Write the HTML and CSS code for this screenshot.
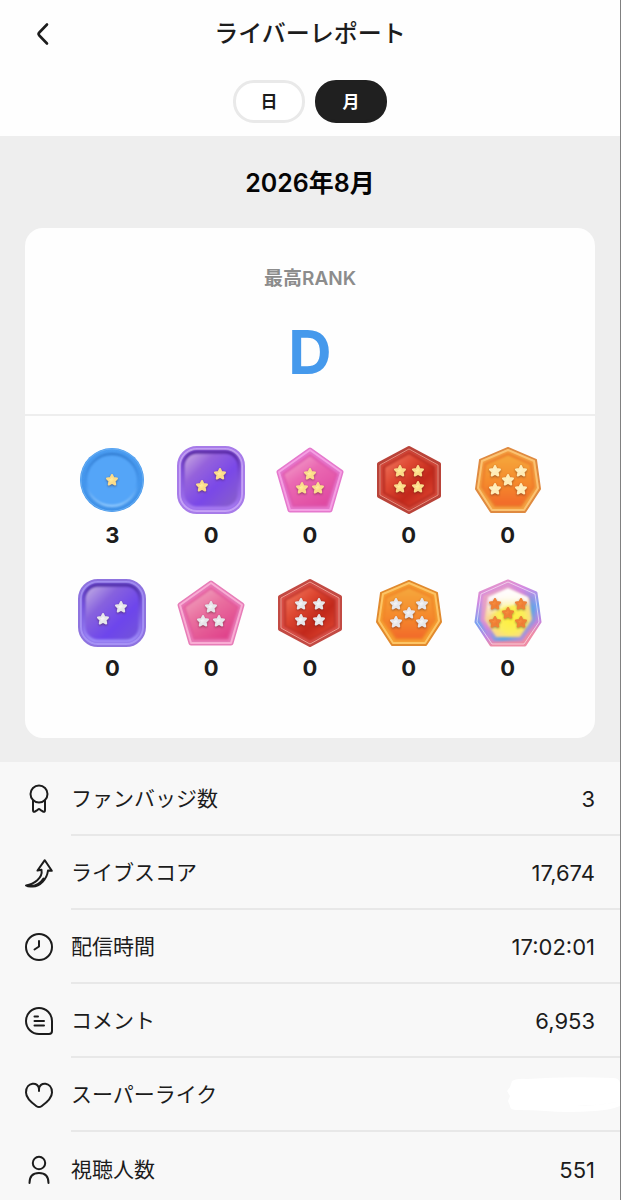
FILE: index.html
```html
<!DOCTYPE html>
<html lang="ja">
<head>
<meta charset="utf-8">
<meta name="viewport" content="width=device-width, initial-scale=1">
<title>ライバーレポート</title>
<link rel="stylesheet" href="styles.css">
</head>
<body>
<svg class="defs" aria-hidden="true">
  <defs>
    <linearGradient id="blue-rim" x1="0" y1="0" x2="0" y2="1"><stop offset="0" stop-color="#2f78cc"/><stop offset=".6" stop-color="#4697ee"/><stop offset="1" stop-color="#9fd2ff"/></linearGradient>
    <linearGradient id="blue" x1="0" y1="0" x2="0" y2="1"><stop offset="0" stop-color="#4b9df2"/><stop offset="1" stop-color="#3f91e8"/></linearGradient>
    <linearGradient id="violet" x1="0" y1="0" x2="1" y2="1"><stop offset="0" stop-color="#d0b4e4"/><stop offset=".3" stop-color="#9562dc"/><stop offset=".6" stop-color="#7a48e8"/><stop offset="1" stop-color="#8a62c6"/></linearGradient>
    <linearGradient id="violet-rim" x1="0" y1="0" x2="0" y2="1"><stop offset="0" stop-color="#53249f"/><stop offset=".35" stop-color="#7646d2"/><stop offset="1" stop-color="#a87cf2"/></linearGradient>
    <linearGradient id="indigo-rim" x1="0" y1="0" x2="0" y2="1"><stop offset="0" stop-color="#4c2ba6"/><stop offset=".35" stop-color="#6c49d6"/><stop offset="1" stop-color="#a291fa"/></linearGradient>
    <linearGradient id="indigo" x1="0" y1="0" x2="1" y2="1"><stop offset="0" stop-color="#cab8e6"/><stop offset=".33" stop-color="#8762de"/><stop offset=".65" stop-color="#6d45ec"/><stop offset="1" stop-color="#7456d6"/></linearGradient>
    <linearGradient id="pink" x1="0" y1="0" x2=".7" y2="1"><stop offset="0" stop-color="#f6b3d3"/><stop offset=".45" stop-color="#ea69b2"/><stop offset="1" stop-color="#e04aa2"/></linearGradient>
    <linearGradient id="rose" x1="0" y1="0" x2=".7" y2="1"><stop offset="0" stop-color="#f4b3c9"/><stop offset=".5" stop-color="#e96f9f"/><stop offset="1" stop-color="#e0438b"/></linearGradient>
    <linearGradient id="red" x1="0" y1=".1" x2=".8" y2="1"><stop offset="0" stop-color="#f07860"/><stop offset=".35" stop-color="#de4832"/><stop offset=".68" stop-color="#c2281b"/><stop offset="1" stop-color="#de4530"/></linearGradient>
    <linearGradient id="orange" x1="0" y1="0" x2="0" y2="1"><stop offset="0" stop-color="#f5a93d"/><stop offset=".55" stop-color="#f58a2c"/><stop offset="1" stop-color="#f2692a"/></linearGradient>
    <linearGradient id="rainbow-rim" x1="0" y1="0" x2=".3" y2="1"><stop offset="0" stop-color="#ee9ac0"/><stop offset=".3" stop-color="#d38ae1"/><stop offset=".62" stop-color="#76a0f1"/><stop offset=".85" stop-color="#c585df"/><stop offset="1" stop-color="#ef8ca5"/></linearGradient>
    <linearGradient id="rainbow-inner" x1="0" y1="0" x2="1" y2="1"><stop offset="0" stop-color="#f0b0bc"/><stop offset=".45" stop-color="#d385d9"/><stop offset=".7" stop-color="#5ea5e4"/><stop offset="1" stop-color="#e783cc"/></linearGradient>
    <radialGradient id="rainbow" cx=".55" cy=".6" r=".6"><stop offset="0" stop-color="#fff13b"/><stop offset=".45" stop-color="#fbee5c"/><stop offset=".78" stop-color="#f8cfa0"/><stop offset="1" stop-color="#e796cf"/></radialGradient>
    <linearGradient id="gold" x1="0" y1="0" x2="1" y2="1"><stop offset="0" stop-color="#fffbe0"/><stop offset=".5" stop-color="#ffe994"/><stop offset="1" stop-color="#f8c763"/></linearGradient>
    <linearGradient id="cream" x1="0" y1="0" x2="1" y2="1"><stop offset="0" stop-color="#fffbe2"/><stop offset="1" stop-color="#ffe2a0"/></linearGradient>
    <linearGradient id="silver" x1="0" y1="0" x2="1" y2="1"><stop offset="0" stop-color="#ffffff"/><stop offset=".5" stop-color="#f2f2f4"/><stop offset="1" stop-color="#c6c8ce"/></linearGradient>
    <linearGradient id="amber" x1="0" y1="0" x2="1" y2="1"><stop offset="0" stop-color="#ffad4e"/><stop offset="1" stop-color="#e65f26"/></linearGradient>
    <linearGradient id="gloss" x1="0" y1="0" x2="0" y2="1"><stop offset="0" stop-color="#fff"/><stop offset=".3" stop-color="#fff" stop-opacity=".9"/><stop offset="1" stop-color="#fff" stop-opacity="0"/></linearGradient>
  </defs>
  <symbol id="star" viewBox="-8 -8 16 16">
    <path class="star-shape" d="M0-5 1.6-1.9 5-1.5 2.6 1 3.2 4.5 0 2.9-3.2 4.5-2.6 1-5-1.5-1.6-1.9Z"/>
  </symbol>
  <symbol id="two" viewBox="-36 -36 72 72"><use href="#star" x="-17" y="-2" width="16" height="16"/><use href="#star" x="1" y="-14" width="16" height="16"/></symbol>
  <symbol id="three" viewBox="-36 -36 72 72"><use href="#star" x="-8" y="-14" width="16" height="16"/><use href="#star" x="-16" y="0" width="16" height="16"/><use href="#star" x="0" y="0" width="16" height="16"/></symbol>
  <symbol id="four" viewBox="-36 -36 72 72"><use href="#star" x="-17" y="-17" width="16" height="16"/><use href="#star" x="1" y="-17" width="16" height="16"/><use href="#star" x="-17" y="-1" width="16" height="16"/><use href="#star" x="1" y="-1" width="16" height="16"/></symbol>
  <symbol id="five" viewBox="-36 -36 72 72"><use href="#star" x="-21" y="-17" width="16" height="16"/><use href="#star" x="5" y="-17" width="16" height="16"/><use href="#star" x="-8" y="-8" width="16" height="16"/><use href="#star" x="-21" y="1" width="16" height="16"/><use href="#star" x="5" y="1" width="16" height="16"/></symbol>
</svg>

<header class="header">
  <div class="titlebar">
    <button class="back" type="button" aria-label="戻る">
      <svg width="24" height="24" viewBox="0 0 24 24"><path d="M17 2.500 9.300 10.500Q7.800 12 9.300 13.500L17 21.500" fill="none" stroke="#1c1c1c" stroke-width="2.600" stroke-linecap="round"/></svg>
    </button>
    <h1 class="title">ライバーレポート</h1>
  </div>
  <div class="tabs">
    <button class="tab" type="button" aria-pressed="false">日</button>
    <button class="tab tab-active" type="button" aria-pressed="true">月</button>
  </div>
</header>

<main>
  <section class="summary">
    <h2 class="month">2026年8月</h2>
    <div class="card">
      <div class="rank">
        <p class="rank-label">最高RANK</p>
        <p class="rank-value">D</p>
      </div>
      <ul class="badges">
        <li class="badge">
          <svg class="medal" viewBox="-36 -36 72 72"><circle r="32" fill="url(#blue)"/><circle r="31" fill="none" stroke="#66adf2"/><circle class="face" r="26" fill="#54a5f8" stroke="url(#blue-rim)" stroke-width="2"/><use class="stars gold" href="#star" x="-8" y="-8" width="16" height="16"/></svg>
          <span class="count">3</span>
        </li>
        <li class="badge">
          <svg class="medal" viewBox="-36 -36 72 72"><rect x="-33" y="-33" width="66" height="66" rx="19" fill="#9a6be9" stroke="#a77be9" stroke-width="2"/><rect x="-31" y="-31" width="62" height="62" rx="17" fill="none" stroke="#c8a5f7" stroke-width="2"/><rect class="face" x="-28" y="-28" width="56" height="56" rx="14" fill="url(#violet)" stroke="url(#violet-rim)" stroke-width="3"/><use class="stars gold" href="#two" x="-36" y="-36" width="72" height="72"/></svg>
          <span class="count">0</span>
        </li>
        <li class="badge">
          <svg class="medal" viewBox="-36 -36 72 72"><g stroke-linejoin="round"><path d="M0-30 31-8 20 30H-20L-31-8Z" fill="#ed7bcf" stroke="#e579cd" stroke-width="5"/><path d="M0-30 31-8 20 30H-20L-31-8Z" fill="none" stroke="#f59fe3" stroke-width="2"/><path class="face" d="M0-25 27-6 17 26H-17L-27-6Z" fill="url(#pink)" stroke="#dc55ac" stroke-width="2"/></g><use class="stars gold" href="#three" x="-36" y="-36" width="72" height="72"/></svg>
          <span class="count">0</span>
        </li>
        <li class="badge">
          <svg class="medal" viewBox="-36 -36 72 72"><g stroke-linejoin="round"><path d="M0-32 30-16V16L0 32-30 16V-16Z" fill="#d64a3b" stroke="#b94339" stroke-width="4"/><path d="M0-31 29-15V15L0 31-29 15V-15Z" fill="none" stroke="#eb8e7f"/><path class="face" d="M0-27 25-13V13L0 27-25 13V-13Z" fill="url(#red)" stroke="#b52b20" stroke-width="2"/></g><use class="stars gold" href="#four" x="-36" y="-36" width="72" height="72"/></svg>
          <span class="count">0</span>
        </li>
        <li class="badge">
          <svg class="medal" viewBox="-36 -36 72 72"><g stroke-linejoin="round"><path d="M0-32 28-20 32 9 17 32H-17L-32 9-28-20Z" fill="#f4a343" stroke="#df8a40" stroke-width="2"/><path d="M0-30 26-19 30 8 16 30H-16L-30 8-26-19Z" fill="none" stroke="#fbc373" stroke-width="2"/><path class="face" d="M0-26 23-16 26 7 13 26H-13L-26 7-23-16Z" fill="url(#orange)" stroke="#ec7a2a" stroke-width="2"/></g><use class="stars cream" href="#five" x="-36" y="-36" width="72" height="72"/></svg>
          <span class="count">0</span>
        </li>
        <li class="badge">
          <svg class="medal" viewBox="-36 -36 72 72"><rect x="-33" y="-33" width="66" height="66" rx="19" fill="#8667e6" stroke="#8e73df" stroke-width="2"/><rect x="-31" y="-31" width="62" height="62" rx="17" fill="none" stroke="#a793f5" stroke-width="2"/><rect class="face" x="-28" y="-28" width="56" height="56" rx="14" fill="url(#indigo)" stroke="url(#indigo-rim)" stroke-width="3"/><use class="stars silver" href="#two" x="-36" y="-36" width="72" height="72"/></svg>
          <span class="count">0</span>
        </li>
        <li class="badge">
          <svg class="medal" viewBox="-36 -36 72 72"><g stroke-linejoin="round"><path d="M0-30 31-8 20 30H-20L-31-8Z" fill="#f17fba" stroke="#e77db8" stroke-width="5"/><path d="M0-30 31-8 20 30H-20L-31-8Z" fill="none" stroke="#f9add4" stroke-width="2"/><path class="face" d="M0-25 27-6 17 26H-17L-27-6Z" fill="url(#rose)" stroke="#e0589a" stroke-width="2"/></g><use class="stars silver" href="#three" x="-36" y="-36" width="72" height="72"/></svg>
          <span class="count">0</span>
        </li>
        <li class="badge">
          <svg class="medal" viewBox="-36 -36 72 72"><g stroke-linejoin="round"><path d="M0-32 30-16V16L0 32-30 16V-16Z" fill="#dc5149" stroke="#c24a43" stroke-width="4"/><path d="M0-31 29-15V15L0 31-29 15V-15Z" fill="none" stroke="#f49a91"/><path class="face" d="M0-27 25-13V13L0 27-25 13V-13Z" fill="url(#red)" stroke="#bd3329" stroke-width="2"/></g><use class="stars silver" href="#four" x="-36" y="-36" width="72" height="72"/></svg>
          <span class="count">0</span>
        </li>
        <li class="badge">
          <svg class="medal" viewBox="-36 -36 72 72"><g stroke-linejoin="round"><path d="M0-32 28-20 32 9 17 32H-17L-32 9-28-20Z" fill="#f6a033" stroke="#e18a2e" stroke-width="2"/><path d="M0-30 26-19 30 8 16 30H-16L-30 8-26-19Z" fill="none" stroke="#fdc566" stroke-width="2"/><path class="face" d="M0-26 23-16 26 7 13 26H-13L-26 7-23-16Z" fill="url(#orange)" stroke="#f08428" stroke-width="2"/></g><use class="stars silver" href="#five" x="-36" y="-36" width="72" height="72"/></svg>
          <span class="count">0</span>
        </li>
        <li class="badge">
          <svg class="medal" viewBox="-36 -36 72 72"><g stroke-linejoin="round"><path d="M0-32 28-20 32 9 17 32H-17L-32 9-28-20Z" fill="url(#rainbow-rim)" stroke="url(#rainbow-rim)" stroke-width="3"/><path d="M0-31 27-19 31 9 16 31H-16L-31 9-27-19Z" fill="none" stroke="#fff" stroke-opacity=".55"/><path class="face" d="M0-26 23-16 26 7 13 26H-13L-26 7-23-16Z" fill="url(#rainbow)" stroke="url(#rainbow-inner)" stroke-width="4"/><path class="face" d="M0-25 20-16 21-8Q0-12-22 6L-20-16Z" fill="url(#gloss)"/></g><use class="stars amber" href="#five" x="-36" y="-36" width="72" height="72"/></svg>
          <span class="count">0</span>
        </li>
      </ul>
    </div>
  </section>

  <dl class="stats">
    <div class="stat">
      <svg class="icon" viewBox="0 0 30 30"><circle cx="15" cy="10" r="8.500"/><path d="M9 16.500V26Q9 28.400 11 27.500L12.500 26.700 14 25.500Q15 24.700 16 25.500L17.500 26.700 19 27.500Q21 28.400 21 26V16.500"/></svg>
      <div class="line"><dt>ファンバッジ数</dt><dd>3</dd></div>
    </div>
    <div class="stat">
      <svg class="icon" viewBox="0 0 30 30"><path d="M2 27.500C10 26.500 19 20 17.500 11.800L13.500 12.500 20.800 2.200 27.800 12.800 24 12.500C23 21 16 29 8 28.500Q4 28.800 2 27.500ZM7 28Q15 27.500 19.500 20.500"/></svg>
      <div class="line"><dt>ライブスコア</dt><dd>17,674</dd></div>
    </div>
    <div class="stat">
      <svg class="icon" viewBox="0 0 30 30"><circle cx="15" cy="15" r="13"/><path d="M15 9V14.500L10.500 17.500"/></svg>
      <div class="line"><dt>配信時間</dt><dd>17:02:01</dd></div>
    </div>
    <div class="stat">
      <svg class="icon" viewBox="0 0 30 30"><path d="M28 15A13 13 0 1 0 15 28H25Q28 28 28 25ZM10.500 10.500H14M10.500 15H20M10.500 19.500H20"/></svg>
      <div class="line"><dt>コメント</dt><dd>6,953</dd></div>
    </div>
    <div class="stat">
      <svg class="icon" viewBox="0 0 30 30"><path d="M15 11V9C15 1.500 2 1.500 2 12.500C2 18.500 8 23 12.500 26.200Q15 28 17.500 26.200C22 23 28 18.500 28 12.500C28 1.500 15 1.500 15 9"/></svg>
      <div class="line"><dt>スーパーライク</dt><dd class="masked"><svg class="smear" viewBox="0 0 113 36" preserveAspectRatio="none" aria-hidden="true"><path d="M5 4Q10 1 20 2 60-1 106 1 112 1 113 6V29Q104 33 88 34 60 36 38 34 22 33 10 33 3 33 3 29L1 24 3 19 0 14 3 10Z" fill="#fff"/><path d="M62 29Q90 29 112 24.500 100 28 62 29Z" fill="#f5f5f5"/></svg></dd></div>
    </div>
    <div class="stat">
      <svg class="icon" viewBox="0 0 30 30"><circle cx="15" cy="8" r="6.200"/><path d="M5.500 28Q5.500 18 15 18T24.500 28"/></svg>
      <div class="line"><dt>視聴人数</dt><dd>551</dd></div>
    </div>
  </dl>
</main>
</body>
</html>
```

FILE: styles.css
```css
* {
  box-sizing: border-box;
}

body {
  margin: 0;
  border-right: 1px solid #808080;
  background: #f8f8f8;
  color: #1c1c1c;
  font-family: Inter, "Noto Sans CJK JP", sans-serif;
}

h1, h2, p, ul, dl, dd {
  margin: 0;
  padding: 0;
}

button {
  padding: 0;
  border: 0;
  background: none;
  color: inherit;
  font: inherit;
}

.defs {
  position: absolute;
  width: 0;
  height: 0;
}

.header {
  padding: 14px 24px 13px;
  background: #fefefe;
}

.titlebar {
  display: grid;
  grid-template-columns: 40px 1fr 40px;
  align-items: center;
  height: 40px;
}

.back {
  display: flex;
  padding-left: 6px;
}

.title {
  font-size: 24px;
  line-height: 40px;
  font-weight: 500;
  text-align: center;
}

.tabs {
  display: flex;
  justify-content: center;
  gap: 10px;
  margin-top: 26px;
}

.tab {
  width: 72px;
  height: 43px;
  border: 3px solid #e9e9e9;
  border-radius: 21px;
  background: #fff;
  font-size: 17px;
  line-height: 36px;
  font-weight: 700;
}

.tab-active {
  border-color: #202020;
  background: #202020;
  color: #fff;
}

.summary {
  padding: 27px 25px 24px;
  background: #eee;
}

.month {
  color: #050505;
  font-size: 25px;
  line-height: 40px;
  font-weight: 600;
  text-align: center;
}

.card {
  margin-top: 25px;
  border-radius: 18px;
  background: #fefefe;
}

.rank {
  padding: 35px 0 26px;
  border-bottom: 2px solid #eee;
  text-align: center;
}

.rank-label {
  color: #8c8c8c;
  font-size: 19px;
  line-height: 32px;
  font-weight: 600;
}

.rank-value {
  margin-top: 21px;
  color: #4599ec;
  font-size: 60px;
  line-height: 72px;
  font-weight: 700;
}

.badges {
  display: grid;
  grid-template-columns: repeat(5, 1fr);
  row-gap: 28px;
  padding: 28px 38px 56px;
  list-style: none;
}

.badge {
  display: flex;
  flex-direction: column;
  align-items: center;
}

.medal {
  width: 72px;
  height: 72px;
}

.face {
  filter: blur(1px);
}

.star-shape {
  stroke-width: 2;
  stroke-linejoin: round;
}

.stars {
  filter: drop-shadow(0 1px 1px rgb(60 20 20 / 45%));
}

.gold {
  fill: url(#gold);
  stroke: #fbdc8c;
}

.cream {
  fill: url(#cream);
  stroke: #ffedb8;
}

.silver {
  fill: url(#silver);
  stroke: #e6e6ea;
}

.amber {
  fill: url(#amber);
  stroke: #ef8036;
}

.count {
  margin-top: 5px;
  font-size: 22px;
  line-height: 28px;
  font-weight: 700;
}

.stats {
  background: #f8f8f8;
}

.stat {
  display: flex;
  align-items: center;
  padding-left: 24px;
}

.icon {
  flex: none;
  width: 30px;
  height: 30px;
  margin-right: 17px;
  fill: none;
  stroke: #1c1c1c;
  stroke-width: 2;
  stroke-linecap: round;
  stroke-linejoin: round;
}

.line {
  display: flex;
  flex: 1;
  align-items: center;
  justify-content: space-between;
  height: 74px;
  padding-top: 2px;
  padding-right: 25px;
  border-bottom: 2px solid #e8e8e8;
  font-size: 22px;
  line-height: 30px;
}

.line dt {
  font-size: 21px;
  font-weight: 400;
}

.stat:last-child .line {
  height: 69px;
  padding-top: 6px;
  border-bottom: 0;
}

.stat:last-child .icon {
  margin-top: 6px;
}

.masked {
  margin-right: -25px;
}

.smear {
  display: block;
  width: 113px;
  height: 36px;
}
```
